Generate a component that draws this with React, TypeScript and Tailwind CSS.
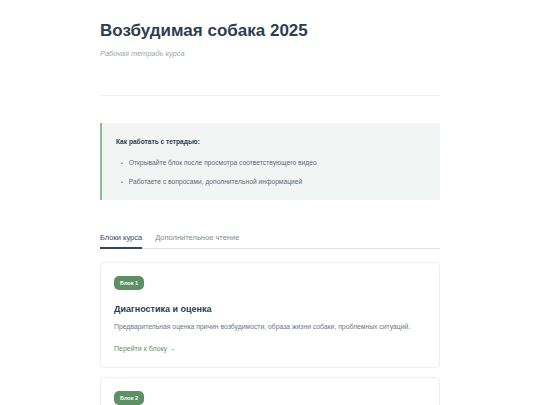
import React from "react";

type Block = {
  num: number;
  title: string;
  description: string;
};

const blocks: Block[] = [
  {
    num: 1,
    title: "Диагностика и оценка",
    description:
      "Предварительная оценка причин возбудимости, образа жизни собаки, проблемных ситуаций.",
  },
  {
    num: 2,
    title: "Базовые навыки",
    description: "Работа с вниманием и спокойствием.",
  },
];

const BlockCard = ({ block }: { block: Block }) => (
  <div className="rounded-[4px] border border-[#eceff0] bg-white px-[13px] pt-[13px] pb-[13px]">
    <div className="w-fit rounded-[5px] bg-[#5e9066] px-[6px] py-[3px] text-[5.5px] font-bold leading-[8px] text-white">
      Блок {block.num}
    </div>
    <h3 className="mt-[13px] text-[9px] font-bold leading-[12px] text-[#2c3e50]">
      {block.title}
    </h3>
    <p className="mt-[7px] text-[6.8px] leading-[10px] text-[#6b7780]">
      {block.description}
    </p>
    <a className="mt-[12px] block text-[7px] leading-[10px] text-[#5e9066]">
      Перейти к блоку →
    </a>
  </div>
);

export default function App() {
  return (
    <div className="h-[405px] overflow-hidden bg-white font-['Liberation_Sans',Arial,sans-serif]">
      <div className="mx-auto w-[340px] pt-[19px]">
        <h1 className="text-[17px] font-bold leading-[24px] text-[#2c3e50]">
          Возбудимая собака 2025
        </h1>
        <p className="mt-[6px] text-[7.4px] italic leading-[10px] text-[#9aa5a6]">
          Рабочая тетрадь курса
        </p>
        <div className="mt-[36px] border-t border-[#eef1f2]" />

        <div className="mt-[27px] border-l-2 border-[#8fbb95] bg-[#f3f5f5] px-[14px] pt-[14px] pb-[13px]">
          <p className="text-[6.6px] font-bold leading-[10px] text-[#2c3e50]">
            Как работать с тетрадью:
          </p>
          <ul className="mt-[11px] flex flex-col gap-[9px] pl-[5px] text-[6.7px] leading-[10px] text-[#5f6b73]">
            <li className="flex items-center gap-[6px]">
              <span className="text-[5px]">•</span>
              Открывайте блок после просмотра соответствующего видео
            </li>
            <li className="flex items-center gap-[6px]">
              <span className="text-[5px]">•</span>
              Работаете с вопросами, дополнительной информацией
            </li>
          </ul>
        </div>

        <div className="mt-[33px] flex gap-[13px] border-b border-[#dfe3e5] text-[7.5px] leading-[10px]">
          <div className="-mb-px border-b-2 border-[#34495e] pb-[4px] text-[#34495e]">
            Блоки курса
          </div>
          <div className="pb-[4px] text-[#7f8a8f]">Дополнительное чтение</div>
        </div>

        <div className="mt-[13px] flex flex-col gap-[9px]">
          {blocks.map((b) => (
            <BlockCard key={b.num} block={b} />
          ))}
        </div>
      </div>
    </div>
  );
}
